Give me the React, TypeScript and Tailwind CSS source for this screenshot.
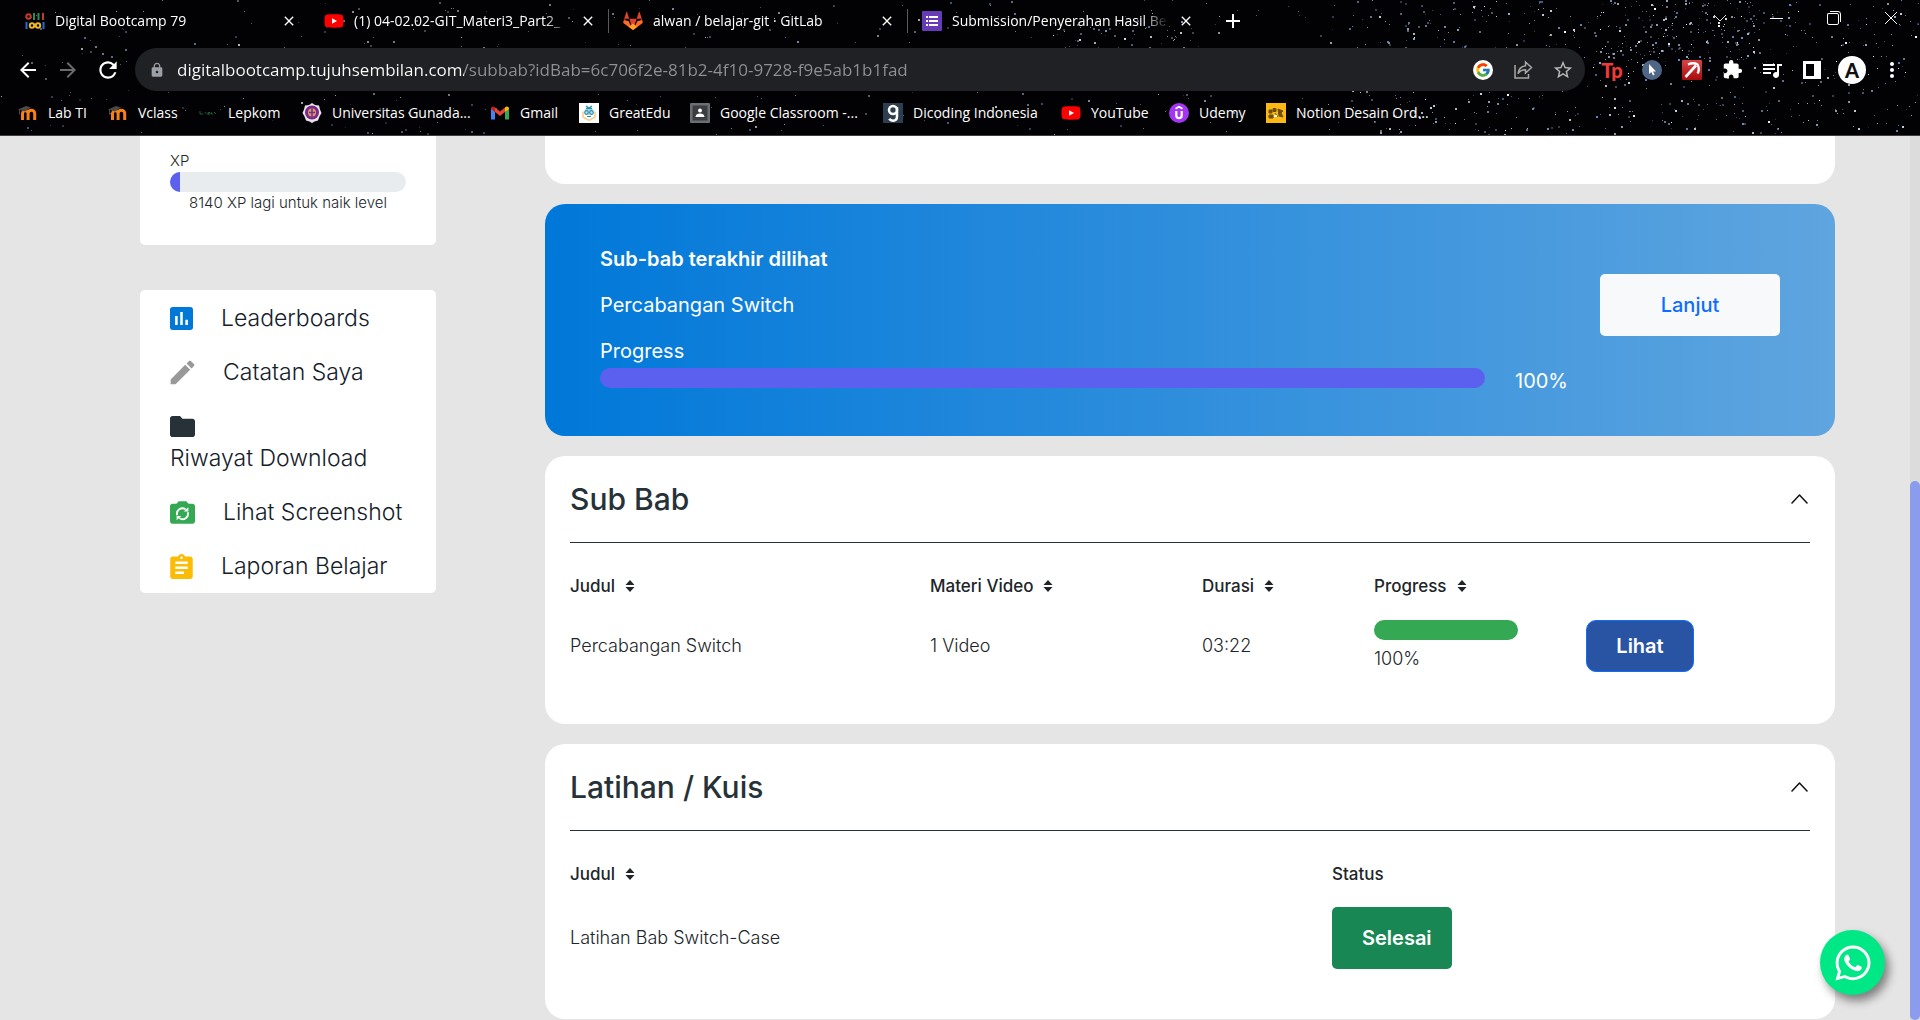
import type { ReactNode } from "react";
import { FaYoutube, FaGitlab, FaWhatsapp } from "react-icons/fa";
import { FcGoogle } from "react-icons/fc";
import {
  MdArrowBack,
  MdArrowForward,
  MdRefresh,
  MdLock,
  MdStarBorder,
  MdExtension,
  MdQueueMusic,
  MdMoreVert,
  MdClose,
  MdAdd,
} from "react-icons/md";

/* ---------- star field behind the browser chrome ---------- */

type Star = { x: number; y: number; s: number; o: number; c: string };

function makeStars(): Star[] {
  let seed = 79;
  const rnd = () => {
    seed = (seed * 1664525 + 1013904223) % 4294967296;
    return seed / 4294967296;
  };
  const tones = ["#ffffff", "#9fb4d8", "#6f8fd0", "#8fa0b8", "#c8d8e8"];
  const stars: Star[] = [];
  const add = (x0: number, x1: number, y0: number, y1: number, n: number, bright: number) => {
    for (let i = 0; i < n; i++) {
      stars.push({
        x: Math.floor(x0 + rnd() * (x1 - x0)),
        y: Math.floor(y0 + rnd() * (y1 - y0)),
        s: rnd() > 0.65 ? 2 : 1,
        o: 0.25 + rnd() * bright,
        c: tones[Math.floor(rnd() * tones.length)],
      });
    }
  };
  add(0, 1350, 0, 135, 420, 0.5);
  add(1350, 1920, 0, 135, 680, 0.75);
  add(1600, 1760, 0, 60, 150, 0.75);
  add(1050, 1200, 20, 48, 50, 0.6);
  return stars;
}

const STARS = makeStars();

function StarField() {
  return (
    <svg
      className="absolute inset-0 h-full w-full"
      viewBox="0 0 1920 135"
      preserveAspectRatio="xMaxYMid slice"
      shapeRendering="crispEdges"
      aria-hidden="true"
    >
      {STARS.map((p, i) => (
        <rect key={i} x={p.x} y={p.y} width={p.s} height={p.s} fill={p.c} opacity={p.o} />
      ))}
    </svg>
  );
}

/* ---------- favicons ---------- */

function BootcampIcon() {
  return (
    <svg width="20" height="20" viewBox="0 0 20 20" fill="none" strokeWidth="2">
      <circle cx="3.5" cy="5.5" r="2.2" stroke="#c5392f" />
      <path d="M9 2v7" stroke="#2e8b57" />
      <path d="M13.500 2v7" stroke="#2e8b57" />
      <path d="M18 2v7" stroke="#c5392f" />
      <path d="M1.500 11v7" stroke="#1f6fd0" />
      <circle cx="7" cy="14.500" r="2.200" stroke="#f0b429" />
      <circle cx="13" cy="14.500" r="2.200" stroke="#f0b429" />
      <path d="M18.500 11v7" stroke="#1f6fd0" />
    </svg>
  );
}

function YoutubeIcon() {
  return (
    <span className="relative flex h-5 w-5 items-center justify-center">
      <span className="absolute h-2 w-2 bg-white" />
      <FaYoutube className="relative h-5 w-5 text-[#ff0000]" />
    </span>
  );
}

function GitlabIcon() {
  return (
    <span className="relative flex h-5 w-5 items-center justify-center">
      <FaGitlab className="h-5 w-5 text-[#e24329]" />
      <svg className="absolute inset-0" width="20" height="20" viewBox="0 0 20 20">
        <path d="M10 19 .8 12 1.600 9.300 5.500 10zM10 19l9.200-7-.8-2.700-3.900.7z" fill="#fc6d26" />
        <path d="m10 19-4-3.200 4-3.300 4 3.300z" fill="#fca326" />
      </svg>
    </span>
  );
}

function FormsIcon() {
  return (
    <svg width="20" height="20" viewBox="0 0 20 20">
      <rect width="20" height="20" rx="1" fill="#673ab7" />
      <path d="M4 5h2v2H4zM7 5h9v2H7zM4 9h2v2H4zM7 9h9v2H7zM4 13h2v2H4zM7 13h9v2H7z" fill="#fff" />
    </svg>
  );
}

function MoodleIcon() {
  return (
    <svg width="20" height="20" viewBox="0 0 20 20" fill="none">
      <path d="M4.500 17v-6.500a2.800 2.800 0 0 1 5.600 0V17M10.100 17v-6.500a3.300 3.300 0 0 1 6.600 0V17" stroke="#f98012" strokeWidth="3" />
      <path d="M0 6.500 8 3l5 1.500-6 4z" fill="#4a4a4a" />
      <path d="M1.500 6.500v5" stroke="#4a4a4a" strokeWidth="1" />
    </svg>
  );
}

function LepkomIcon() {
  return (
    <svg width="20" height="20" viewBox="0 0 20 20" fill="none">
      <path d="M2 8v3h3M6.500 10h2M10 12V9.500h2V11h-2M13.500 9.500V11h1.500M16 9l2 2" stroke="#1d5c3a" strokeWidth="1" />
    </svg>
  );
}

function UniversityIcon() {
  return (
    <svg width="20" height="20" viewBox="0 0 20 20">
      <path d="m10 0 3 2 4 .5 1 4 1.500 3.500-2 3.500-1.500 4-3.500 1L10 20l-2.500-1.500-3.500-1-1.500-4-2-3.500L2 6.500l1-4L7 2z" fill="#e9e2ea" />
      <circle cx="10" cy="9.500" r="7" fill="#7a2a86" />
      <circle cx="10" cy="9.500" r="4" fill="#d99a6c" />
      <path d="M10 5.500v8M7 9.500h6" stroke="#7a2a86" strokeWidth="1.500" />
    </svg>
  );
}

function GmailIcon() {
  return (
    <svg width="20" height="20" viewBox="0 0 20 20">
      <path d="M1 5v11.500h4V9z" fill="#4285f4" />
      <path d="M19 5v11.500h-4V9z" fill="#34a853" />
      <path d="M5 9V4.500l5 3.900 5-3.900V9l-5 3.900z" fill="#ea4335" />
      <path d="M1 5.500C1 3.500 3.200 2.900 4.500 4l.5.500V9L1 6z" fill="#c5221f" />
      <path d="M19 5.500c0-2-2.200-2.600-3.500-1.500l-.5.500V9l4-3z" fill="#fbbc04" />
    </svg>
  );
}

function GreatEduIcon() {
  return (
    <svg width="20" height="20" viewBox="0 0 20 20" fill="none">
      <rect width="20" height="20" fill="#fff" />
      <path d="M4 8.500v5.500l6 3.500 6-3.500V8.500" stroke="#f2cf8b" strokeWidth="1.500" />
      <path d="M6 6h8v6H6z" fill="#bfe0ea" />
      <path d="M7 3 10 5l3-2M7 5.500h6" stroke="#2b8fb0" strokeWidth="1.300" />
      <circle cx="7.500" cy="9.500" r="1.800" stroke="#2b8fb0" strokeWidth="1.200" />
      <circle cx="12.500" cy="9.500" r="1.800" stroke="#2b8fb0" strokeWidth="1.200" />
      <path d="M8 13.500h4" stroke="#2b8fb0" />
    </svg>
  );
}

function ClassroomIcon() {
  return (
    <svg width="20" height="20" viewBox="0 0 20 20">
      <rect width="20" height="20" rx="1" fill="#6b6e72" />
      <rect x="2.500" y="2.500" width="15" height="15" fill="#3b3d40" />
      <circle cx="10" cy="7.500" r="2" fill="#fff" />
      <path d="M5.500 14c0-2.500 2.500-3.500 4.500-3.500s4.500 1 4.500 3.500z" fill="#fff" />
    </svg>
  );
}

function DicodingIcon() {
  return (
    <svg width="20" height="20" viewBox="0 0 20 20" fill="none">
      <rect width="20" height="20" fill="#2d3e50" />
      <circle cx="10" cy="7" r="4" stroke="#fff" strokeWidth="2.500" />
      <path d="M14 4v9.500c0 3-1.500 4.200-4 4.200-1.800 0-3-.7-3.800-1.900" stroke="#fff" strokeWidth="2.500" />
    </svg>
  );
}

function UdemyIcon() {
  return (
    <svg width="20" height="20" viewBox="0 0 20 20" fill="none">
      <circle cx="10" cy="10" r="10" fill="#a435f0" />
      <path d="m6.500 5.800 3.500-2 3.500 2" stroke="#fff" strokeWidth="1.800" />
      <path d="M7.300 8v4.500a2.700 2.700 0 0 0 5.400 0V8" stroke="#fff" strokeWidth="2.200" />
    </svg>
  );
}

function NotionDesignIcon() {
  return (
    <svg width="20" height="20" viewBox="0 0 20 20" fill="none">
      <rect width="20" height="20" fill="#fdb813" />
      <path d="M3 7h3v3H3zM7 5.500h3v3H7zM3 12h4v3H3zM9 10l3 4M12 6l5 2-2 2 2 4-4-1z" fill="#6b4e12" stroke="#6b4e12" />
      <path d="M8 12h3v2H8z" fill="#fff" />
    </svg>
  );
}

/* ---------- toolbar icons ---------- */

function ShareIcon() {
  return (
    <svg width="20" height="20" viewBox="0 0 20 20" fill="none" stroke="#a8a8a8" strokeWidth="1.500">
      <path d="M2 5v13h13.500v-4" />
      <path d="M12.500 2 18.500 7.500l-6 5.500V9.800c-3 0-5.500 1-7.500 3.700.6-4 2.800-7 7.500-7.700z" />
    </svg>
  );
}

function CursorIcon() {
  return (
    <svg width="20" height="20" viewBox="0 0 20 20">
      <circle cx="10" cy="10" r="10" fill="#4f6686" />
      <path d="M7 4v10l2.300-2 1.700 3.500 1.600-.8-1.600-3.300H14z" fill="#fff" />
    </svg>
  );
}

function RedArrowIcon() {
  return (
    <svg width="20" height="20" viewBox="0 0 20 20" fill="none">
      <defs>
        <linearGradient id="redTile" x1="0" y1="0" x2="0" y2="1">
          <stop offset="0" stopColor="#d84444" />
          <stop offset="1" stopColor="#a80d0d" />
        </linearGradient>
      </defs>
      <rect width="20" height="20" rx="1" fill="url(#redTile)" />
      <path d="M3.500 17 14 5.500" stroke="#fff" strokeWidth="2.600" />
      <path d="M6 4.500c3-1.400 7-1.500 9.500 0 1.500 2.500 1.600 6 .2 9" stroke="#fff" strokeWidth="2.400" />
    </svg>
  );
}

function SidePanelIcon() {
  return (
    <svg width="18" height="18" viewBox="0 0 18 18">
      <path d="M0 0h18v18H0zM3 3v12h8V3z" fill="#fff" fillRule="evenodd" />
    </svg>
  );
}

function SortIcon() {
  return (
    <svg width="10" height="12" viewBox="0 0 10 12" fill="#212529" aria-hidden="true">
      <path d="M5 0 9.500 5h-9zM5 12 .5 7h9z" />
    </svg>
  );
}

function ChevronUpIcon() {
  return (
    <svg width="17" height="10" viewBox="0 0 17 10" fill="none" stroke="#111" strokeWidth="1.500" strokeLinecap="round" strokeLinejoin="round">
      <path d="M1 9 8.500 1 16 9" />
    </svg>
  );
}

/* ---------- browser chrome ---------- */

const TABS: { title: string; icon: ReactNode; sep: boolean }[] = [
  { title: "Digital Bootcamp 79", icon: <BootcampIcon />, sep: false },
  { title: "(1) 04-02.02-GIT_Materi3_Part2_", icon: <YoutubeIcon />, sep: true },
  { title: "alwan / belajar-git · GitLab", icon: <GitlabIcon />, sep: true },
  { title: "Submission/Penyerahan Hasil Be", icon: <FormsIcon />, sep: false },
];

const BOOKMARKS: { label: string; icon: ReactNode; width: string }[] = [
  { label: "Lab TI", icon: <MoodleIcon />, width: "w-[90px]" },
  { label: "Vclass", icon: <MoodleIcon />, width: "w-[90px]" },
  { label: "Lepkom", icon: <LepkomIcon />, width: "w-[104px]" },
  { label: "Universitas Gunada...", icon: <UniversityIcon />, width: "w-[188px]" },
  { label: "Gmail", icon: <GmailIcon />, width: "w-[89px]" },
  { label: "GreatEdu", icon: <GreatEduIcon />, width: "w-[111px]" },
  { label: "Google Classroom -...", icon: <ClassroomIcon />, width: "w-[193px]" },
  { label: "Dicoding Indonesia", icon: <DicodingIcon />, width: "w-[178px]" },
  { label: "YouTube", icon: <YoutubeIcon />, width: "w-[108px]" },
  { label: "Udemy", icon: <UdemyIcon />, width: "w-[97px]" },
  { label: "Notion Desain Ord...", icon: <NotionDesignIcon />, width: "w-[170px]" },
];

function IconButton({ label, children }: { label: string; children: ReactNode }) {
  return (
    <button type="button" aria-label={label} className="flex h-8 w-10 shrink-0 items-center justify-center text-white">
      {children}
    </button>
  );
}

function TabStrip() {
  return (
    <div className="flex h-[42px] items-center">
      <div className="flex min-w-0 pl-[25px]">
        {TABS.map((t) => (
          <div key={t.title} className="flex w-[299px] items-center">
            <a href="#" className="flex min-w-0 items-center gap-[10px]">
              <span className="shrink-0">{t.icon}</span>
              <span className="w-[216px] whitespace-nowrap [mask-image:linear-gradient(to_right,black_88%,transparent)]">
                {t.title}
              </span>
            </a>
            <button type="button" aria-label="Tutup tab" className="ml-[10px] shrink-0">
              <MdClose className="h-4 w-4" />
            </button>
            {t.sep && <span className="ml-3 h-6 w-px bg-[#5a5a5a]" />}
          </div>
        ))}
      </div>
      <button type="button" aria-label="Tab baru" className="shrink-0">
        <MdAdd className="h-6 w-6" />
      </button>
      <div className="ml-auto flex shrink-0 items-start self-start">
        <button type="button" aria-label="Cari tab" className="flex h-9 w-[57px] items-center justify-center">
          <svg width="14" height="8" viewBox="0 0 14 8" fill="none" stroke="#ddd">
            <path d="m1 1 6 6 6-6" />
          </svg>
        </button>
        <button type="button" aria-label="Kecilkan" className="flex h-9 w-[57px] items-center justify-center">
          <span className="h-px w-[13px] bg-white" />
        </button>
        <button type="button" aria-label="Pulihkan" className="flex h-9 w-[57px] items-center justify-center">
          <svg width="14" height="14" viewBox="0 0 14 14" fill="none" stroke="#fff">
            <rect x="0.500" y="2.500" width="11" height="11" rx="1.500" />
            <path d="M3 .5h8a2.500 2.500 0 0 1 2.500 2.500v8" />
          </svg>
        </button>
        <button type="button" aria-label="Tutup" className="flex h-9 w-[58px] items-center justify-center">
          <svg width="14" height="14" viewBox="0 0 14 14" fill="none" stroke="#fff">
            <path d="m1 1 12 12M13 1 1 13" />
          </svg>
        </button>
      </div>
    </div>
  );
}

function Toolbar() {
  return (
    <div className="flex h-[55px] items-center px-2">
      <IconButton label="Kembali"><MdArrowBack className="h-6 w-6" /></IconButton>
      <IconButton label="Maju"><MdArrowForward className="h-6 w-6 text-[#6b6b6b]" /></IconButton>
      <IconButton label="Muat ulang"><MdRefresh className="h-[26px] w-[26px]" /></IconButton>
      <div className="ml-[7px] flex h-[43px] flex-1 items-center rounded-full bg-[#202124] pl-[14px] pr-[2px]">
        <MdLock className="h-4 w-4 shrink-0 text-[#9aa0a6]" />
        <input
          aria-label="Alamat"
          readOnly
          value="digitalbootcamp.tujuhsembilan.com/subbab?idBab=6c706f2e-81b2-4f10-9728-f9e5ab1b1fad"
          className="ml-3 min-w-0 flex-1 bg-[linear-gradient(to_right,#ffffff_287px,#8e9196_287px)] bg-clip-text text-[17px] leading-6 text-transparent outline-none"
        />
        <IconButton label="Google">
          <span className="flex h-5 w-5 items-center justify-center rounded-full bg-white"><FcGoogle className="h-4 w-4" /></span>
        </IconButton>
        <IconButton label="Bagikan"><ShareIcon /></IconButton>
        <IconButton label="Tandai"><MdStarBorder className="h-[22px] w-[22px] text-[#b8b8b8]" /></IconButton>
      </div>
      <div className="ml-[7px] flex items-center">
        <IconButton label="Tp">
          <span className="font-['Lato'] text-xl leading-5 font-black text-[#ef3b36]">Tp</span>
        </IconButton>
        <IconButton label="Kursor"><CursorIcon /></IconButton>
        <IconButton label="Panah"><RedArrowIcon /></IconButton>
        <IconButton label="Ekstensi"><MdExtension className="h-[21px] w-[21px]" /></IconButton>
        <IconButton label="Media"><MdQueueMusic className="h-6 w-6" /></IconButton>
        <IconButton label="Panel samping"><SidePanelIcon /></IconButton>
        <IconButton label="Profil">
          <span className="flex h-7 w-7 items-center justify-center rounded-full bg-white font-['Lato'] text-xl font-black text-[#111]">A</span>
        </IconButton>
        <IconButton label="Menu"><MdMoreVert className="h-6 w-6" /></IconButton>
      </div>
    </div>
  );
}

function Bookmarks() {
  return (
    <nav className="flex h-[38px] items-start overflow-hidden pl-[18px] pt-[6px]">
      {BOOKMARKS.map((b) => (
        <a key={b.label} href="#" className={`flex shrink-0 items-center gap-[10px] whitespace-nowrap ${b.width}`}>
          <span className="shrink-0">{b.icon}</span>
          {b.label}
        </a>
      ))}
    </nav>
  );
}

function BrowserChrome() {
  return (
    <header className="relative shrink-0 overflow-hidden border-b border-[#3f3b40] bg-[#020205] font-['Open_Sans',sans-serif] text-sm text-white">
      <StarField />
      <div className="relative">
        <TabStrip />
        <Toolbar />
        <Bookmarks />
      </div>
    </header>
  );
}

/* ---------- page ---------- */

const MENU: { label: string; stacked?: boolean; icon: ReactNode }[] = [
  {
    label: "Leaderboards",
    icon: (
      <svg width="23" height="23" viewBox="3 3 18 18" fill="#0078d7">
        <path d="M19 3H5c-1.100 0-2 .9-2 2v14c0 1.100.9 2 2 2h14c1.100 0 2-.9 2-2V5c0-1.100-.9-2-2-2zM9 17H7v-7h2v7zm4 0h-2V7h2v10zm4 0h-2v-4h2v4z" />
      </svg>
    ),
  },
  {
    label: "Catatan Saya",
    icon: (
      <svg width="25" height="25" viewBox="2.500 2.500 19 19" fill="#999">
        <path d="M3 17.250V21h3.750L17.810 9.940l-3.750-3.750L3 17.250zM20.710 7.040c.39-.39.39-1.020 0-1.410l-2.340-2.340c-.39-.39-1.020-.39-1.410 0l-1.830 1.830 3.750 3.750 1.830-1.830z" />
      </svg>
    ),
  },
  {
    label: "Riwayat Download",
    stacked: true,
    icon: (
      <svg width="25" height="21" viewBox="2 4 20 16" preserveAspectRatio="none" fill="#263238">
        <path d="M10 4H4c-1.100 0-1.990.9-1.990 2L2 18c0 1.100.9 2 2 2h16c1.100 0 2-.9 2-2V8c0-1.100-.9-2-2-2h-8l-2-2z" />
      </svg>
    ),
  },
  {
    label: "Lihat Screenshot",
    icon: (
      <svg width="25" height="23" viewBox="2 3 20 18" fill="#34a853">
        <path d="M20 5h-3.170L15 3H9L7.170 5H4c-1.100 0-2 .9-2 2v12c0 1.100.9 2 2 2h16c1.100 0 2-.9 2-2V7c0-1.100-.9-2-2-2z" />
        <path d="M7.800 14.200A4.300 4.300 0 0 1 14.500 9.500M16.200 11.800A4.300 4.300 0 0 1 9.500 16.500" fill="none" stroke="#fff" strokeWidth="1.500" />
        <path d="M13 11.200h3.700V7.800zM11 14.800H7.300v3.400z" fill="#fff" />
      </svg>
    ),
  },
  {
    label: "Laporan Belajar",
    icon: (
      <svg width="23" height="25" viewBox="3 1 18 20" fill="#fbbc05">
        <path d="M19 3h-4.180C14.400 1.840 13.300 1 12 1c-1.300 0-2.400.84-2.820 2H5c-1.100 0-2 .9-2 2v14c0 1.100.9 2 2 2h14c1.100 0 2-.9 2-2V5c0-1.100-.9-2-2-2zm-7 0c.55 0 1 .45 1 1s-.45 1-1 1-1-.45-1-1 .45-1 1-1zm2 14H7v-2h7v2zm3-4H7v-2h10v2zm0-4H7V7h10v2z" />
      </svg>
    ),
  },
];

function Sidebar() {
  return (
    <aside className="w-[296px] shrink-0">
      <section className="rounded-b-[5px] bg-white px-[30px] pb-8 pt-[14px]">
        <p className="text-[15px] leading-[22px] font-light text-[#212529]">XP</p>
        <div role="progressbar" aria-label="XP" aria-valuenow={4} className="h-5 overflow-hidden rounded-full bg-[#e9ecef]">
          <div className="h-full w-[10px] bg-[#5c60ee]" />
        </div>
        <p className="text-center text-[15px] leading-[21px] font-light text-[#212529]">8140 XP lagi untuk naik level</p>
      </section>
      <nav className="mt-[45px] rounded-[5px] bg-white px-[30px] pt-px text-[23px] leading-8">
        {MENU.map((m) =>
          m.stacked ? (
            <a key={m.label} href="#" className="flex h-[86px] flex-col justify-center">
              <span className="flex h-8 items-center">{m.icon}</span>
              <span>{m.label}</span>
            </a>
          ) : (
            <a key={m.label} href="#" className="flex h-[54px] items-center gap-7">
              <span className="shrink-0">{m.icon}</span>
              <span className="whitespace-nowrap">{m.label}</span>
            </a>
          ),
        )}
      </nav>
    </aside>
  );
}

function LastSeen() {
  return (
    <section className="flex rounded-[20px] bg-[linear-gradient(90deg,#0078d9,#5fa5df)] px-[55px] py-10 text-xl leading-[30px] text-white">
      <div className="flex-1">
        <h2 className="mb-4 font-semibold">Sub-bab terakhir dilihat</h2>
        <p className="mb-4">Percabangan Switch</p>
        <p>Progress</p>
        <div className="flex items-start">
          <div role="progressbar" aria-label="Progress" aria-valuenow={100} className="mt-0.5 h-5 flex-1 rounded-full bg-[#5c60ee]" />
          <span className="w-[115px] pl-[30px]">100%</span>
        </div>
      </div>
      <button type="button" className="mt-[30px] h-[62px] w-[180px] self-start rounded-[5px] bg-[#f8f9fa] font-medium text-[#0d6efd]">
        Lanjut
      </button>
    </section>
  );
}

function Accordion({ title, children }: { title: string; children: ReactNode }) {
  return (
    <section className="rounded-[20px] bg-white px-[25px] pb-[41px]">
      <div className="flex h-[87px] items-center justify-between border-b border-[#263238]">
        <h2 className="text-3xl font-medium text-[#263238]">{title}</h2>
        <button type="button" aria-label={`Tutup ${title}`} className="pr-0.5">
          <ChevronUpIcon />
        </button>
      </div>
      {children}
    </section>
  );
}

function Th({ label, width, sort }: { label: string; width: string; sort?: boolean }) {
  return (
    <th scope="col" className={`h-[46px] p-0 text-left text-[17px] font-medium ${width}`}>
      {sort ? (
        <button type="button" className="flex items-center gap-[10px]">
          {label}
          <SortIcon />
        </button>
      ) : (
        label
      )}
    </th>
  );
}

export default function App() {
  return (
    <div className="flex h-screen flex-col overflow-hidden font-['Inter',sans-serif]">
      <BrowserChrome />
      <div className="relative flex min-h-0 flex-1 overflow-hidden bg-[#e5e5e5]">
        <div className="flex flex-1 items-start gap-[109px] pl-[140px] pr-[75px] font-light text-[#15202a]">
          <Sidebar />
          <main className="flex min-w-0 flex-1 flex-col gap-5 font-normal">
            <div className="h-12 rounded-b-[20px] bg-white" />
            <LastSeen />
            <Accordion title="Sub Bab">
              <table className="mt-5 w-full table-fixed text-lg text-[#212529]">
                <thead>
                  <tr>
                    <Th label="Judul" width="w-[360px]" sort />
                    <Th label="Materi Video" width="w-[272px]" sort />
                    <Th label="Durasi" width="w-[172px]" sort />
                    <Th label="Progress" width="w-[212px]" sort />
                    <th className="p-0" aria-label="Aksi" />
                  </tr>
                </thead>
                <tbody className="font-light">
                  <tr className="h-[74px]">
                    <td className="p-0">Percabangan Switch</td>
                    <td className="p-0">1 Video</td>
                    <td className="p-0">03:22</td>
                    <td className="p-0">
                      <div role="progressbar" aria-label="Progress" aria-valuenow={100} className="h-5 w-36 rounded-full bg-[#34a853]" />
                      <p className="mt-[6px] leading-[26px]">100%</p>
                    </td>
                    <td className="p-0">
                      <button type="button" className="h-[52px] w-[108px] rounded-[10px] border border-[#0d6efd] bg-[#2954a3] text-xl font-semibold text-white">
                        Lihat
                      </button>
                    </td>
                  </tr>
                </tbody>
              </table>
            </Accordion>
            <Accordion title="Latihan / Kuis">
              <table className="mt-5 w-full table-fixed text-lg text-[#212529]">
                <thead>
                  <tr>
                    <Th label="Judul" width="w-[762px]" sort />
                    <Th label="Status" width="w-auto" />
                  </tr>
                </thead>
                <tbody className="font-light">
                  <tr className="h-[81px]">
                    <td className="p-0">Latihan Bab Switch-Case</td>
                    <td className="p-0">
                      <button type="button" className="flex h-[62px] w-[120px] items-center rounded-[5px] bg-[#198754] pl-[30px] text-xl font-semibold text-white">
                        Selesai
                      </button>
                    </td>
                  </tr>
                </tbody>
              </table>
            </Accordion>
          </main>
        </div>
        <div className="flex w-[10px] shrink-0 flex-col bg-[#dcdcdc]">
          <div className="basis-[39%]" />
          <div className="flex-1 rounded-full bg-[#8c9cec]" />
        </div>
        <a
          href="#"
          aria-label="WhatsApp"
          className="absolute bottom-[25px] right-[35px] flex h-[65px] w-[65px] items-center justify-center rounded-full bg-[#00e785] text-white shadow-[4px_6px_10px_rgba(0,0,0,0.45)]"
        >
          <FaWhatsapp className="h-10 w-10" />
        </a>
      </div>
    </div>
  );
}
